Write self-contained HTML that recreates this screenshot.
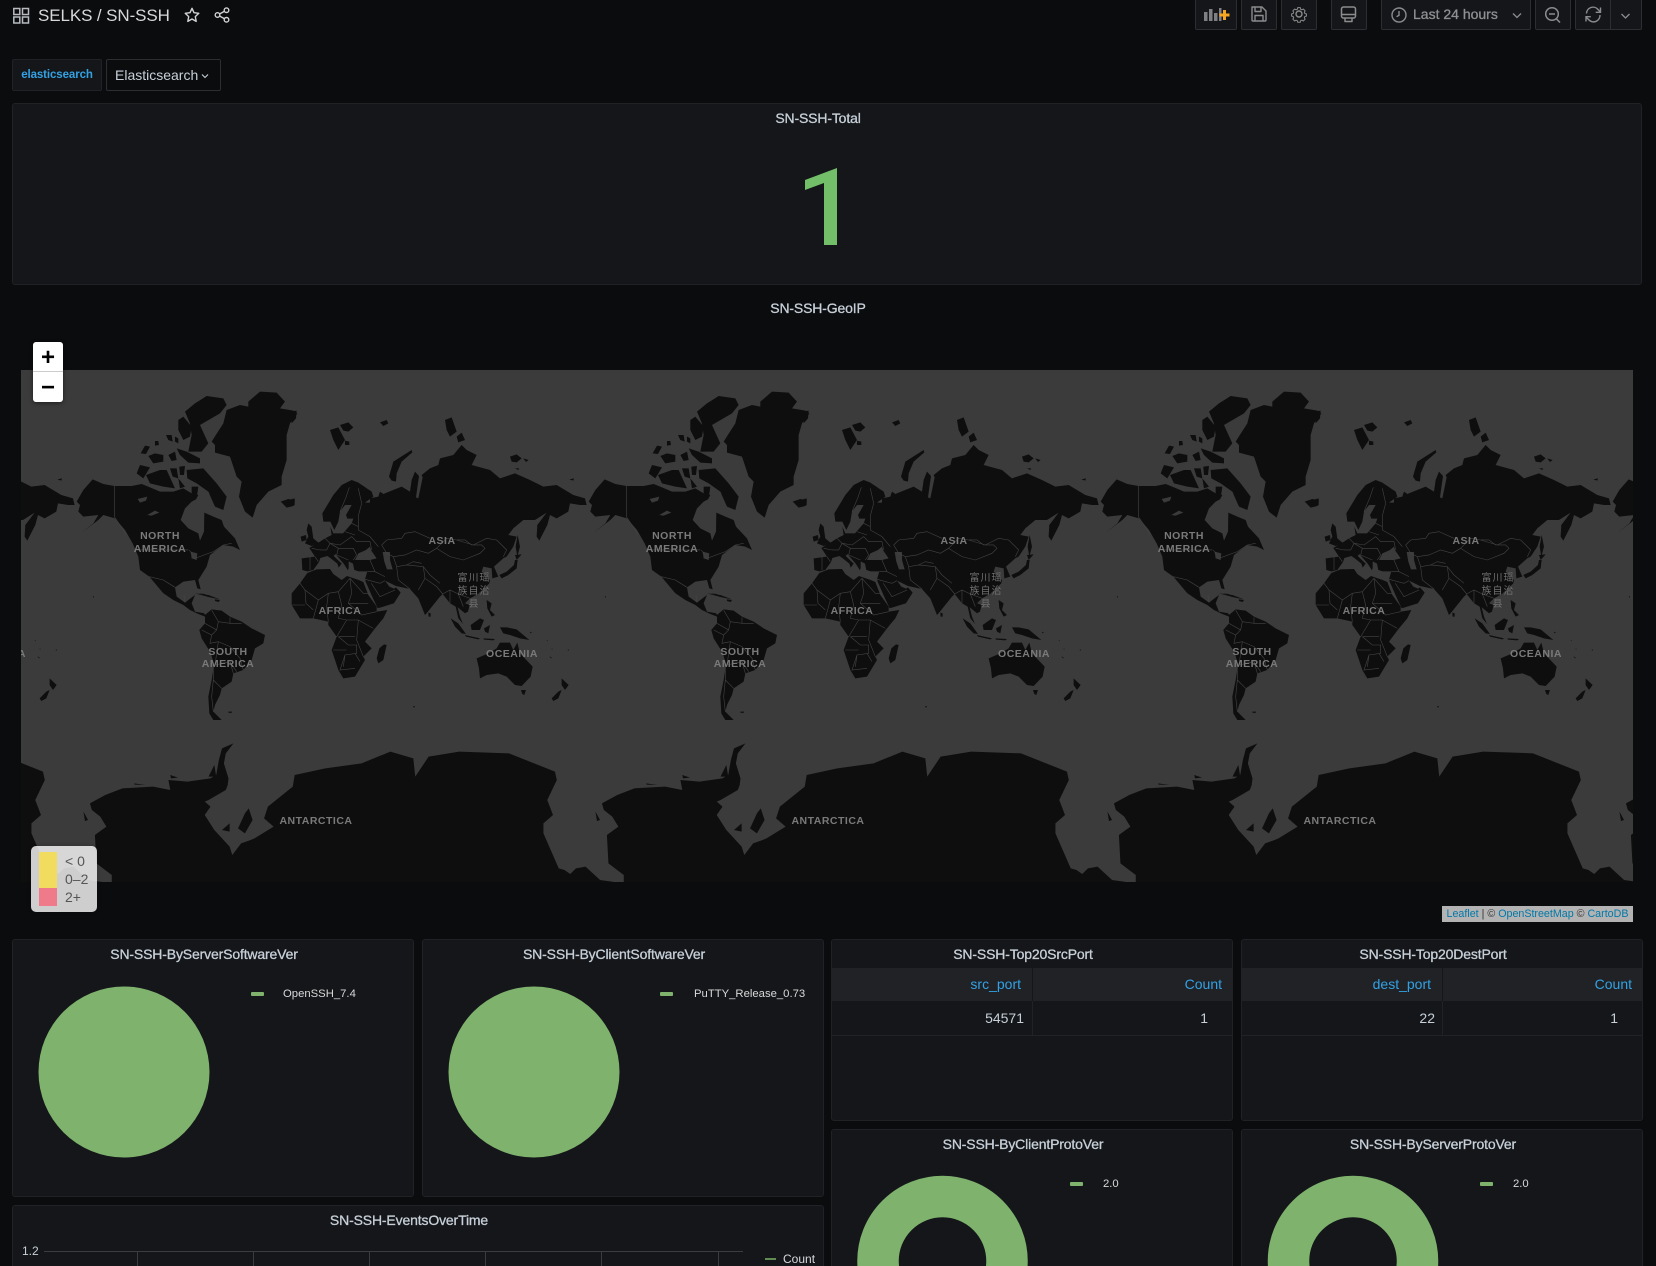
<!DOCTYPE html>
<html><head><meta charset="utf-8"><title>SELKS / SN-SSH</title>
<style>
html,body{margin:0;padding:0;background:#0b0c0e;width:1656px;height:1266px;overflow:hidden}
#w{position:absolute;left:0;top:0;width:1656px;height:1266px;overflow:hidden;font-family:"Liberation Sans","Noto Sans CJK SC",sans-serif;color:#d8d9da}
.a{position:absolute}
.p{position:absolute;box-sizing:border-box;background:#141619;border:1px solid #202226;border-radius:3px}
.t{position:absolute;text-align:center;font-size:14px;letter-spacing:-.15px;line-height:18px;color:#c7d0d9;-webkit-text-stroke:.3px #c7d0d9;white-space:nowrap}
.b{position:absolute;top:-4px;height:34px;box-sizing:border-box;background:#141619;border:1px solid #2c2e32;border-radius:2px}
.b svg{position:absolute;left:-1px;top:-1px}
.hd{position:absolute;background:#202226;height:33px}
.r{position:absolute;font-size:14px;line-height:18px;white-space:nowrap;text-align:right}
.blue{color:#33a2e5}
.lg{position:absolute;font-size:11.3px;line-height:14px;color:#d8d9da;white-space:nowrap}
.sw{position:absolute;height:4px;background:#7eb26d;border-radius:1px}
.ml{font:bold 10.5px "Liberation Sans","Noto Sans CJK SC",sans-serif;letter-spacing:.5px;fill:#7a7a7a;text-anchor:middle}
.cj{font:10px "Noto Sans CJK SC",sans-serif;letter-spacing:1px;fill:#707070;text-anchor:middle}
</style></head><body><div id="w">

<!-- header -->
<svg class="a" style="left:12px;top:7px" width="20" height="18" viewBox="0 0 20 18" fill="none" stroke="#b8bcc0" stroke-width="1.5"><rect x="1.8" y="1.5" width="6" height="6"/><rect x="10.5" y="1.5" width="6" height="6"/><rect x="1.8" y="10" width="6" height="6"/><rect x="10.5" y="10" width="6" height="6"/></svg>
<div class="a" style="left:38px;top:5px;font-size:17px;letter-spacing:-.1px;line-height:22px;color:#d8d9da;white-space:nowrap">SELKS / SN-SSH</div>
<svg class="a" style="left:183px;top:6px" width="18" height="18" viewBox="0 0 18 18" fill="none" stroke="#d0d2d4" stroke-width="1.4" stroke-linejoin="round"><path d="M9 2.3l2 4.4 4.8.6-3.5 3.3.9 4.8L9 13l-4.2 2.4.9-4.8L2.200 7.300l4.800-.6z"/></svg>
<svg class="a" style="left:213px;top:6px" width="18" height="18" viewBox="0 0 18 18" fill="none" stroke="#d0d2d4" stroke-width="1.4"><circle cx="4.500" cy="9" r="2.300"/><circle cx="13.500" cy="4.200" r="2.300"/><circle cx="13.500" cy="13.800" r="2.300"/><path d="M6.500 8L11.500 5.300M6.500 10L11.500 12.700"/></svg>

<div class="b" style="left:1195px;width:42px"><svg width="42" height="34" fill="#7d7f82"><rect x="9" y="16" width="3.500" height="9"/><rect x="14" y="13" width="3.500" height="12"/><rect x="19" y="17" width="3.500" height="8"/><rect x="24" y="12" width="2.500" height="13"/><path d="M28 14h3v3.500h3.500v3H31V24h-3v-3.500h-3.500v-3H28z" fill="#f5a623"/></svg></div>
<div class="b" style="left:1241px;width:36px"><svg width="36" height="34" fill="none" stroke="#8a8c8e" stroke-width="1.400" stroke-linejoin="round"><path d="M11 11h10l4 4v9a1 1 0 0 1-1 1H12a1 1 0 0 1-1-1z"/><path d="M14 11v4.500h6V11M14 25v-5.500h8V25"/></svg></div>
<div class="b" style="left:1281px;width:36px"><svg width="36" height="34" fill="none" stroke="#8a8c8e" stroke-width="1.400" stroke-linejoin="round"><circle cx="18" cy="18" r="3"/><path d="M16.200 10.500h3.600l.5 2.200 1.700.8 2-1.100 2.500 2.500-1.100 2 .7 1.700 2.200.5v3.200l-2.200.5-.7 1.700 1.100 2-2.500 2.500-2-1.100-1.700.7-.5 2.200h-3.600l-.5-2.200-1.700-.7-2 1.100-2.500-2.500 1.100-2-.7-1.700-2.200-.5v-3.200l2.200-.5.7-1.700-1.100-2 2.500-2.500 2 1.100 1.700-.8z" transform="translate(18 18.500) scale(.72) translate(-18 -20)"/></svg></div>
<div class="b" style="left:1331px;width:36px"><svg width="36" height="34" fill="none" stroke="#8a8c8e" stroke-width="1.500" stroke-linejoin="round"><rect x="10.500" y="11" width="14" height="11" rx="2"/><path d="M10.500 18.500h14M14 22v3.500h7V22"/></svg></div>
<div class="b" style="left:1381px;width:150px"><svg width="150" height="34" fill="none" stroke="#8a8c8e" stroke-width="1.400"><circle cx="18" cy="19" r="7"/><path d="M18 15v4.300l-2.500 1.400"/><path d="M132 17.500l4 4 4-4" stroke-width="1.300"/></svg><div class="a" style="left:31px;top:8px;font-size:14px;line-height:18px;color:#8e9092;-webkit-text-stroke:.3px #8e9092;white-space:nowrap">Last 24 hours</div></div>
<div class="b" style="left:1535px;width:36px"><svg width="36" height="34" fill="none" stroke="#8a8c8e" stroke-width="1.500"><circle cx="17" cy="18" r="6.300"/><path d="M14 18h6M21.500 23l3.500 3.500"/></svg></div>
<div class="b" style="left:1575px;width:36px;border-radius:2px 0 0 2px"><svg width="36" height="34" fill="none" stroke="#8a8c8e" stroke-width="1.400"><path d="M11.500 17.500a6.500 6.500 0 0 1 11.500-4l2.500 2.500M25 19a6.500 6.500 0 0 1-11.500 4.500L11 21"/><path d="M25.500 11.500v4.800h-4.800M11 25.500v-4.800h4.800"/></svg></div>
<div class="b" style="left:1610px;width:32px;border-radius:0 2px 2px 0"><svg width="32" height="34" fill="none" stroke="#8a8c8e" stroke-width="1.300"><path d="M11.500 18l4 4 4-4"/></svg></div>

<!-- variable row -->
<div class="a" style="left:12px;top:59px;width:90px;height:32px;box-sizing:border-box;background:#141619;border:1px solid #202226;border-radius:2px;font-size:11.5px;font-weight:bold;color:#33a2e5;line-height:30px;text-align:center;letter-spacing:-.1px">elasticsearch</div>
<div class="a" style="left:106px;top:59px;width:115px;height:32px;box-sizing:border-box;background:#0b0c0e;border:1px solid #2c2e32;border-radius:2px;font-size:14px;color:#c7d0d9;line-height:30px;padding-left:8px">Elasticsearch</div>
<svg class="a" style="left:200px;top:71px" width="10" height="10" fill="none" stroke="#c7d0d9" stroke-width="1.100"><path d="M2 3.500l3 3 3-3"/></svg>

<!-- total panel -->
<div class="p" style="left:12px;top:103px;width:1630px;height:182px"></div>
<div class="t" style="left:12px;top:109px;width:1612px">SN-SSH-Total</div>
<div class="a" style="left:760px;top:140px;width:122px;height:130px;font-size:600px;font-weight:bold;line-height:130px;color:#73bf69;clip-path:polygon(45px 40px,77px 28px,77px 105px,64px 105px,64px 43px,45px 50px)"><span style="position:absolute;left:-122px;top:0;white-space:nowrap">1</span></div>

<div class="t" style="left:12px;top:299px;width:1612px">SN-SSH-GeoIP</div>

<!-- map -->
<svg class="a" style="left:0;top:0" width="1656" height="1000" viewBox="0 0 1656 1000">
<defs>
<clipPath id="mc"><rect x="21" y="370" width="1612" height="512"/></clipPath>
<g id="tile">
 <!-- North America / Greenland (crop frame 60,380) -->
 <g transform="translate(60,380) scale(.3333)">
  <path fill="#0e0e0e" d="M50,365L70,330 98,298 130,312 163,318 215,318 245,312 270,322 300,335 340,335 370,325 395,340 415,345 408,358 395,365 375,385 362,420 385,445 415,460 420,482 432,455 433,398 460,410 485,420 492,440 525,475 540,510 520,500 490,495 450,525 440,560 415,600 422,628 412,625 405,600 370,605 345,622 350,650 375,668 392,655 405,645 395,670 405,695 432,700 440,712 415,702 390,690 370,675 340,660 310,640 285,610 268,590 240,570 235,530 218,490 195,450 165,415 130,405 115,420 65,458 100,430 115,405 70,410 55,395 60,375Z
  M380,270L430,265 470,310 500,350 490,390 465,380 445,335 410,310 382,295Z
  M258,285L300,270 320,270 345,325 310,320 270,310Z
  M230,280L240,255 270,262 250,295Z
  M375,95L405,70 440,48 490,55 500,75 480,100 420,135 445,190 425,215 385,215 395,165 390,130Z
  M355,120L370,110 395,140 390,170 370,180 355,150Z
  M350,205L380,215 420,235 420,250 385,248 360,225Z
  M242,220L255,197 270,200 258,222Z
  M265,228L285,220 310,225 310,245 280,250Z
  M325,225L345,215 350,240 335,243Z
  M318,165L335,165 338,185 325,180Z
  M345,170L355,175 355,190 345,185Z
  M285,183L295,183 297,195 285,197Z
  M330,265L350,265 355,295 338,290Z
  M358,260L375,258 372,285 360,285Z
  M355,295L375,320 360,325Z
  M395,320L415,320 410,355 395,345Z
  M455,185L490,130 500,90 540,75 565,80 565,65 600,35 650,38 675,65 660,85 700,92 712,100 690,130 680,165 680,240 665,290 665,315 625,335 590,375 578,413 555,395 537,350 545,305 530,290 510,230 465,218 465,195Z
  M662,365L685,357 705,362 700,378 680,383Z
  M745,430L755,440 760,475 778,490 755,498 735,490 745,470 740,450Z
  M722,470L738,465 740,480 725,485Z
  M415,640l18,2 16,8 20,4 -20,-3 -18,-7z M98,648l4,2 -2,4z"/>
  <path fill="#3b3b3b" d="M392,515L412,520 410,540 395,535ZM233,357L262,350 258,362 240,368ZM262,405L285,392 298,398 275,407ZM437,335l10,2 2,14 -10,-2z"/>
  <path fill="none" stroke="#444" stroke-width="1.800" d="M163,318V410L200,465M388,510L405,535 460,515 490,495 515,490M268,590L310,600 345,622M225,510H385M375,668L372,645"/>
 </g>
 <!-- Eurasia (crop frame 290,390) -->
 <g transform="translate(290,390) scale(.3333)">
  <path fill="#0e0e0e" d="M37,540L35,505 75,500 58,474 90,455 105,445 125,435 121,410 130,430 159,430 185,400 190,386 172,386 168,375 185,345 165,345 150,365 145,395 133,420 121,395 100,395 97,370 112,345 130,315 155,285 185,270 205,278 245,305 250,320 225,338 240,338 240,325 265,320 270,305 280,312 335,290 360,305 365,270 375,245 387,258 378,322 385,325 398,262 395,255 420,235 445,225 450,205 490,195 515,165 530,180 560,195 545,225 600,240 630,265 675,250 720,270 760,290 800,285 850,315 885,325 890,345 870,345 840,340 835,365 800,385 780,375 772,405 748,452 740,440 742,405 770,368 735,390 700,390 670,415 655,435 680,440 670,470 650,500 641,504 612,530 625,560 607,565 605,535 580,530 575,545 600,570 598,580 564,612 540,625 525,640 539,645 534,665 525,670 503,652 510,680 519,702 505,685 497,650 480,640 458,612 449,621 410,670 405,675 395,650 385,625 360,597 318,588 285,572 298,590 312,596 318,592 332,608 312,640 270,653 263,655 244,614 227,575 225,568 232,544 206,544 193,540 189,521 180,516 176,515 176,533 174,541 161,521 136,492 131,498 155,521 146,533 142,521 121,504 112,498 91,504 87,516 70,540 52,544Z
  M120,120L145,112 165,150 145,180 130,150Z
  M150,105L175,97 190,112 175,125 160,122Z
  M165,152L178,155 178,165 165,165Z
  M270,97L290,90 295,100 280,108Z
  M297,260L310,215 365,180 367,187 335,215 320,250 318,275 305,272Z
  M465,90L485,82 500,125 480,140 470,120Z
  M500,140L515,128 525,150 505,157Z
  M660,200L680,193 695,205 680,217 665,215Z
  M700,205L716,210 708,216Z
  M838,268L852,265 850,272Z
  M675,235L688,235 685,240Z
  M683,435L690,470 682,500 677,470Z
  M675,495L695,493 680,510Z
  M628,555L650,545 672,525 675,510 683,510 680,535 655,555 635,565Z
  M3,65L20,62 18,85 5,100Z
  M-5,330L14,325 14,345 0,350Z"/>
  <path fill="#3b3b3b" d="M195,510L205,490 228,480 240,470 244,482 260,505 240,510 210,510ZM278,486L300,486 300,510 308,538 291,538 283,515Z"/>
  <path fill="none" stroke="#444" stroke-width="1.800" d="M275,465L290,450 335,445 345,430 375,425 420,445M500,450L550,465 590,445 620,450 650,480 640,500M440,475L480,500 520,510 570,490 585,475 575,465 545,465 525,450 500,450 470,445 440,475M275,465L290,490 310,500 345,495 380,480 415,490 440,475M310,500L320,530 350,525 400,530 420,555 450,580M350,525L370,515 395,520M205,295L215,340 205,378M178,292L168,322 150,365M120,460L150,465 185,440 200,455 240,455 245,480M105,445L120,460 110,480 90,480 65,475M120,460L145,475 190,475 200,495 190,510M145,475L140,495 175,510M205,378L205,420 240,440 265,470M185,400L205,410M165,425L195,435M60,500V540M75,500L85,515M240,510L255,545 285,560M255,545L232,545M225,568L270,580 285,572M244,580L270,620 315,600M320,530L325,570 360,597M400,530L405,565 385,600M405,565L440,590 458,612 480,600 505,612M480,600L480,640M505,612L520,650M505,612L540,625"/>
 </g>
 <!-- Africa, SE Asia, Oceania (crop frame 280,570) -->
 <g transform="translate(280,570) scale(.3333)">
  <path fill="#0e0e0e" d="M82,9L110,-2 150,-3 160,12 185,30 201,18 236,30 250,36 265,75 290,110 290,125 322,120 310,145 285,175 255,215 275,235 250,260 255,270 225,320 190,325 175,300 155,240 170,200 145,165 145,155 100,145 60,145 35,105 35,70 60,40Z
  M312,223L320,225 310,270 295,280 290,265 298,235Z
  M445,128L452,130 452,140 446,140Z
  M620,90L635,100 630,120 645,135 635,140 622,115Z
  M572,165L600,145 612,150 600,180 575,180Z
  M512,145L535,160 558,192 545,190 525,170Z
  M555,195L600,205 595,208 558,200Z
  M612,175L630,165 625,190 615,185Z
  M660,172L680,172 710,178 748,210 720,205 690,195 670,190Z
  M610,205L645,207 640,211 612,209Z
  M590,265L625,250 650,235 660,218 690,218 700,240 712,218 720,250 758,290 752,320 725,348 705,345 680,320 655,310 620,315 600,325 597,295Z
  M723,360L738,360 733,375 727,372Z
  M845,325L866,345 855,360 845,345Z
  M845,360L835,385 820,393 815,385 835,365Z
  M400,408l4,0 0,4 -4,0Z M622,55l5,2 -3,9 -4,-3Z M800,210l3,1 -1,3z M815,235l3,2 -2,2z M862,240l6,-2 -2,4z M750,185l6,3 -4,2z M808,258l8,6 -3,1z"/>
  <path fill="none" stroke="#444" stroke-width="1.800" d="M60,40L75,60 115,90 145,70 175,65 210,25 250,70 270,70M210,25L215,70 205,100 245,135 290,125M115,90L100,145M75,60L78,100 100,120M35,105L75,105M145,70L140,110 145,155M175,65L185,105 175,145 200,150 235,150 280,175M205,100H265M235,150L230,210 250,260M175,200H225M200,150L170,200M175,200L205,225 230,225 230,250 195,255 190,290M160,240H200M225,250L240,275M195,255L180,300 225,295"/>
 </g>
 <!-- South America (crop frame 130,580) -->
 <g transform="translate(130,580) scale(.3333)">
  <path fill="#0e0e0e" d="M245,88L275,92 300,110 335,125 365,145 405,165 400,190 375,205 365,240 340,270 310,280 305,305 275,325 270,345 255,375 250,395 275,420 250,420 238,400 235,350 245,300 252,255 240,215 215,175 208,150 225,130 225,105Z
  M195,40L235,45 270,58 240,52Z M255,58l15,2 -4,6 -11,-3z M295,395l12,0 -3,4 -9,-1z"/>
  <path fill="none" stroke="#444" stroke-width="1.800" d="M225,130L260,150 245,165 215,150M260,150L265,125 245,90M265,125L300,130 300,112M300,130L335,130M245,165L240,190 265,185 300,200 330,235 340,270M240,215L250,250 250,300 245,350 250,395M265,185L255,255 300,245 310,280M300,245L320,275M250,300L275,325"/>
 </g>
 <!-- Antarctica (crop frame 0,720; x scale differs) -->
 <g transform="translate(0,720) scale(.3827,.3333)">
  <path fill="#0e0e0e" d="M292,486V465L252,430 248,345 278,320 262,290 240,270 235,250 275,225 320,205 400,200 445,210 440,180 490,185 550,175 565,165 572,120 580,85 610,70 590,100 585,130 597,175 595,195 590,210 545,240 535,245 550,260 535,285 560,330 600,380 607,405 630,370 655,360 665,355 715,320 690,295 700,260 765,200 770,165 850,145 945,130 1020,95 1080,115 1085,170 1120,110 1200,95 1330,100 1450,155 1455,180 1430,240 1445,285 1420,310 1420,340 1460,445 1475,450 1490,462 1505,445 1530,440 1568,480 1605,486Z
  M650,265L660,300 640,340 622,325 640,280Z
  M580,330L600,310 600,335Z
  M560,135L565,170 545,170Z
  M218,275L230,300 222,303Z
  M445,165l20,8 -18,2z M350,190l30,5 -28,-1z"/>
 </g>
</g>
</defs>
<g clip-path="url(#mc)">
 <rect x="21" y="370" width="1612" height="512" fill="#3b3b3b"/>
 <use href="#tile" x="-512"/><use href="#tile"/><use href="#tile" x="512"/><use href="#tile" x="1024"/><use href="#tile" x="1536"/>
 <text class="ml" x="0" y="657">OCEANIA</text>
 <text class="ml" x="160" y="539">NORTH</text><text class="ml" x="160" y="552">AMERICA</text><text class="ml" x="442" y="544">ASIA</text><text class="ml" x="340" y="614">AFRICA</text><text class="ml" x="228" y="655">SOUTH</text><text class="ml" x="228" y="667">AMERICA</text><text class="ml" x="512" y="657">OCEANIA</text><text class="ml" x="316" y="824">ANTARCTICA</text>
 <text class="cj" x="474" y="581">富川瑶</text><text class="cj" x="474" y="594">族自治</text><text class="cj" x="474" y="607">县</text>
 <text class="ml" x="672" y="539">NORTH</text><text class="ml" x="672" y="552">AMERICA</text><text class="ml" x="954" y="544">ASIA</text><text class="ml" x="852" y="614">AFRICA</text><text class="ml" x="740" y="655">SOUTH</text><text class="ml" x="740" y="667">AMERICA</text><text class="ml" x="1024" y="657">OCEANIA</text><text class="ml" x="828" y="824">ANTARCTICA</text>
 <text class="cj" x="986" y="581">富川瑶</text><text class="cj" x="986" y="594">族自治</text><text class="cj" x="986" y="607">县</text>
 <text class="ml" x="1184" y="539">NORTH</text><text class="ml" x="1184" y="552">AMERICA</text><text class="ml" x="1466" y="544">ASIA</text><text class="ml" x="1364" y="614">AFRICA</text><text class="ml" x="1252" y="655">SOUTH</text><text class="ml" x="1252" y="667">AMERICA</text><text class="ml" x="1536" y="657">OCEANIA</text><text class="ml" x="1340" y="824">ANTARCTICA</text>
 <text class="cj" x="1498" y="581">富川瑶</text><text class="cj" x="1498" y="594">族自治</text><text class="cj" x="1498" y="607">县</text>
</g>
</svg>

<!-- zoom control -->
<div class="a" style="left:33px;top:342px;width:30px;height:60px;background:#fff;border-radius:3px;box-shadow:0 1px 4px rgba(0,0,0,.5)">
 <div class="a" style="left:0;top:0;width:30px;height:29px;border-bottom:1px solid #ccc;text-align:center;font:bold 24px/31px 'Liberation Sans',sans-serif;color:#000">+</div>
 <div class="a" style="left:0;top:30px;width:30px;height:30px;text-align:center;font:bold 24px/31px 'Liberation Sans',sans-serif;color:#000">&#8722;</div>
</div>

<!-- legend -->
<div class="a" style="left:31px;top:846px;width:66px;height:66px;background:rgba(255,255,255,.8);border-radius:5px;box-shadow:0 0 4px rgba(0,0,0,.2)">
 <div class="a" style="left:8px;top:6px;width:18px;height:36px;background:#f2dc5f"></div>
 <div class="a" style="left:8px;top:42px;width:18px;height:18px;background:#ef7a8a"></div>
 <div class="a" style="left:34px;top:6px;font-size:14px;line-height:18px;color:#555">&lt; 0</div>
 <div class="a" style="left:34px;top:24px;font-size:14px;line-height:18px;color:#555">0–2</div>
 <div class="a" style="left:34px;top:42px;font-size:14px;line-height:18px;color:#555">2+</div>
</div>

<!-- attribution -->
<div class="a" style="left:1442px;top:906px;width:191px;height:16px;background:#b3b3b3;font-size:10.7px;line-height:16px;color:#333;text-align:center;white-space:nowrap"><span style="color:#0078a8">Leaflet</span> | © <span style="color:#0078a8">OpenStreetMap</span> © <span style="color:#0078a8">CartoDB</span></div>

<!-- pies -->
<div class="p" style="left:12px;top:939px;width:402px;height:258px"></div>
<div class="t" style="left:12px;top:945px;width:384px">SN-SSH-ByServerSoftwareVer</div>
<svg class="a" style="left:34px;top:982px" width="180" height="180"><circle cx="90" cy="90" r="85.500" fill="#7eb26d"/></svg>
<div class="sw" style="left:251px;top:992px;width:13px"></div>
<div class="lg" style="left:283px;top:987px">OpenSSH_7.4</div>

<div class="p" style="left:422px;top:939px;width:402px;height:258px"></div>
<div class="t" style="left:422px;top:945px;width:384px">SN-SSH-ByClientSoftwareVer</div>
<svg class="a" style="left:444px;top:982px" width="180" height="180"><circle cx="90" cy="90" r="85.500" fill="#7eb26d"/></svg>
<div class="sw" style="left:660px;top:992px;width:13px"></div>
<div class="lg" style="left:694px;top:987px">PuTTY_Release_0.73</div>

<!-- tables -->
<div class="p" style="left:831px;top:939px;width:402px;height:182px"></div>
<div class="t" style="left:831px;top:945px;width:384px">SN-SSH-Top20SrcPort</div>
<div class="hd" style="left:832px;top:968px;width:400px"></div>
<div class="a" style="left:1032px;top:968px;width:1px;height:67px;background:#202226"></div>
<div class="a" style="left:1032px;top:968px;width:1px;height:33px;background:#141619"></div>
<div class="a" style="left:832px;top:1035px;width:400px;height:1px;background:#202226"></div>
<div class="r blue" style="right:635px;top:975px">src_port</div>
<div class="r blue" style="right:434px;top:975px">Count</div>
<div class="r" style="right:632px;top:1009px;color:#c7d0d9">54571</div>
<div class="r" style="right:448px;top:1009px;color:#c7d0d9">1</div>

<div class="p" style="left:1241px;top:939px;width:402px;height:182px"></div>
<div class="t" style="left:1241px;top:945px;width:384px">SN-SSH-Top20DestPort</div>
<div class="hd" style="left:1242px;top:968px;width:400px"></div>
<div class="a" style="left:1442px;top:968px;width:1px;height:67px;background:#202226"></div>
<div class="a" style="left:1442px;top:968px;width:1px;height:33px;background:#141619"></div>
<div class="a" style="left:1242px;top:1035px;width:400px;height:1px;background:#202226"></div>
<div class="r blue" style="right:225px;top:975px">dest_port</div>
<div class="r blue" style="right:24px;top:975px">Count</div>
<div class="r" style="right:221px;top:1009px;color:#c7d0d9">22</div>
<div class="r" style="right:38px;top:1009px;color:#c7d0d9">1</div>

<!-- donuts -->
<div class="p" style="left:831px;top:1129px;width:402px;height:150px"></div>
<div class="t" style="left:831px;top:1135px;width:384px">SN-SSH-ByClientProtoVer</div>
<svg class="a" style="left:842px;top:1166px" width="200" height="100"><circle cx="100.500" cy="95" r="64.500" fill="none" stroke="#7eb26d" stroke-width="41.500"/></svg>
<div class="sw" style="left:1070px;top:1182px;width:13px"></div>
<div class="lg" style="left:1103px;top:1177px">2.0</div>

<div class="p" style="left:1241px;top:1129px;width:402px;height:150px"></div>
<div class="t" style="left:1241px;top:1135px;width:384px">SN-SSH-ByServerProtoVer</div>
<svg class="a" style="left:1252px;top:1166px" width="200" height="100"><circle cx="101" cy="95" r="64.500" fill="none" stroke="#7eb26d" stroke-width="41.500"/></svg>
<div class="sw" style="left:1480px;top:1182px;width:13px"></div>
<div class="lg" style="left:1513px;top:1177px">2.0</div>

<!-- events -->
<div class="p" style="left:12px;top:1205px;width:812px;height:80px"></div>
<div class="t" style="left:12px;top:1211px;width:794px">SN-SSH-EventsOverTime</div>
<div class="lg" style="left:22px;top:1244px;color:#c7d0d9;font-size:12px">1.2</div>
<svg class="a" style="left:0;top:1245px" width="800" height="21" fill="none" stroke="#3a3c40"><path d="M44 6.500H743M137.500 6.500V21M253.500 6.500V21M369.500 6.500V21M485.500 6.500V21M601.500 6.500V21M718.500 6.500V21"/></svg>
<div class="a" style="left:765px;top:1258px;width:11px;height:2px;background:#5f8a52"></div>
<div class="lg" style="left:783px;top:1252px;font-size:12px">Count</div>

</div></body></html>
